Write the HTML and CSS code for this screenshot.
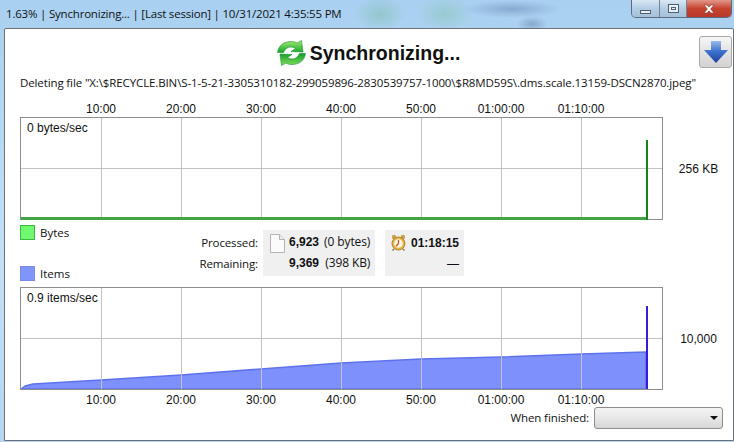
FILE: index.html
```html
<!DOCTYPE html>
<html lang="en">
<head>
<meta charset="utf-8">
<title>Synchronizing</title>
<link rel="stylesheet" href="styles.css">
</head>
<body>
<div class="window">
  <header class="titlebar">
    <span class="title-text">1.63% | Synchronizing... | [Last session] | 10/31/2021 4:35:55 PM</span>
    <div class="controls">
      <span class="ctl ctl-min"><i class="glyph-min"></i></span>
      <span class="ctl ctl-max"><i class="glyph-max"></i></span>
      <span class="ctl ctl-close">
        <svg width="14" height="10" viewBox="0 0 14 10"><path d="M2 1h3l2 2.2L9 1h3L8.6 5 12 9H9L7 6.8 5 9H2l3.400-4z" fill="#fff" stroke="#7d3a30" stroke-width=".6"/></svg>
      </span>
    </div>
  </header>
  <main class="content">
    <div class="heading">
      <div class="heading-main">
        <svg class="sync-icon" width="29" height="26" viewBox="0 0 29 26">
          <defs>
            <linearGradient id="g1" x1="0" y1="0" x2="0" y2="1"><stop offset="0" stop-color="#a5ec70"/><stop offset="1" stop-color="#12a52c"/></linearGradient>
            <linearGradient id="g2" x1="0" y1="0" x2="0" y2="1"><stop offset="0" stop-color="#0f9c2a"/><stop offset="1" stop-color="#86e05c"/></linearGradient>
          </defs>
          <path d="M.5 12.500C1.500 5 7.500 1.500 14 1.500c2.500 0 4.500.5 6 1.500l4.500-2.500 1.500 11.500-12-.5 4.500-3C17 7.500 15.500 7 14 7c-3.500 0-6 2-7.500 5.500z" fill="url(#g1)" stroke="#1c8f32" stroke-width=".6"/>
          <path d="M28.500 13.500C27.500 21 21.500 24.500 15 24.500c-2.500 0-4.500-.5-6-1.500l-4.500 2.500L3 14l12 .5-4.500 3c1.500 1 3 1.500 4.500 1.500 3.500 0 6-2 7.500-5.500z" fill="url(#g2)" stroke="#1c8f32" stroke-width=".6"/>
        </svg>
        <h1 class="heading-text">Synchronizing...</h1>
      </div>
      <button class="down-btn" type="button" aria-label="Minimize to details">
        <svg width="26" height="24" viewBox="0 0 26 24">
          <defs><linearGradient id="g3" x1="0" y1="0" x2="0" y2="1"><stop offset="0" stop-color="#9ab8ea"/><stop offset=".45" stop-color="#3f74d0"/><stop offset="1" stop-color="#1d3f9c"/></linearGradient></defs>
          <path d="M8 1h10v9h7L13 23 1 10h7z" fill="url(#g3)"/>
        </svg>
      </button>
    </div>
    <p class="status">Deleting file "X:\$RECYCLE.BIN\S-1-5-21-3305310182-299059896-2830539757-1000\$R8MD59S\.dms.scale.13159-DSCN2870.jpeg"</p>
    <div class="axis axis-top">
      <span>10:00</span><span>20:00</span><span>30:00</span><span>40:00</span><span>50:00</span><span>01:00:00</span><span>01:10:00</span>
    </div>
    <div class="chart-row">
      <div class="chart">
        <svg class="chart-svg" width="643" height="103" viewBox="0 0 643 103">
          <path class="gridline" d="M81.500 0v103M161.500 0v103M241.500 0v103M321.500 0v103M401.500 0v103M481.500 0v103M561.500 0v103M0 51.500h643"/>
          <rect class="frame" x=".5" y=".5" width="642" height="102"/>
          <rect x="1" y="100" width="626" height="3" fill="#43a443"/>
          <rect x="626" y="23" width="2" height="80" fill="#16841a"/>
        </svg>
        <span class="rate">0 bytes/sec</span>
      </div>
      <span class="scale">256 KB</span>
    </div>
    <div class="middle">
      <div class="legend">
        <div class="legend-item"><i class="swatch swatch-green"></i><span>Bytes</span></div>
        <div class="legend-item"><i class="swatch swatch-blue"></i><span>Items</span></div>
      </div>
      <div class="stat-labels"><span>Processed:</span><span>Remaining:</span></div>
      <div class="panel panel-items">
        <svg class="doc-icon" width="15" height="19" viewBox="0 0 15 19"><path d="M.5.500h9l5 5v13H.5z" fill="#fbfbfb" stroke="#b4b4b4"/><path d="M9.500.500v5h5" fill="#eee" stroke="#b4b4b4"/></svg>
        <div class="panel-grid">
          <b>6,923</b><span>(0 bytes)</span>
          <b>9,369</b><span>(398 KB)</span>
        </div>
      </div>
      <div class="panel panel-time">
        <div class="time-row">
          <svg width="15" height="17" viewBox="0 0 15 17"><circle cx="3" cy="3" r="2.200" fill="#caa24a"/><circle cx="12" cy="3" r="2.200" fill="#caa24a"/><path d="M3 15l-1.500 1.500M12 15l1.500 1.500" stroke="#8a6a2a" stroke-width="1.200"/><circle cx="7.500" cy="9.500" r="6.500" fill="#e6b545" stroke="#a9822d"/><circle cx="7.500" cy="9.500" r="4.300" fill="#fdf6e4"/><path d="M7.500 9.500l-2.500 3M7.500 9.500V6" stroke="#c8431f" stroke-width="1.200" fill="none"/></svg>
          <b>01:18:15</b>
        </div>
        <b class="time-dash">—</b>
      </div>
    </div>
    <div class="chart-row">
      <div class="chart">
        <svg class="chart-svg" width="643" height="103" viewBox="0 0 643 103">
          <path d="M1 102 5 99 13 97 81 93 161 88 241 82 321 76 401 72 481 70 561 67 626 65V102z" fill="#7e90fb" stroke="#5f72ee" stroke-width="1.500" stroke-linejoin="round"/>
          <path class="gridline" d="M81.500 0v103M161.500 0v103M241.500 0v103M321.500 0v103M401.500 0v103M481.500 0v103M561.500 0v103M0 51.500h643"/>
          <rect x="626" y="19" width="2" height="84" fill="#3a1cd8"/>
          <rect class="frame" x=".5" y=".5" width="642" height="102"/>
        </svg>
        <span class="rate">0.9 items/sec</span>
      </div>
      <span class="scale">10,000</span>
    </div>
    <div class="axis axis-bottom">
      <span>10:00</span><span>20:00</span><span>30:00</span><span>40:00</span><span>50:00</span><span>01:00:00</span><span>01:10:00</span>
    </div>
    <div class="finish-row">
      <span class="finish-label">When finished:</span>
      <div class="combo"><i class="combo-arrow"></i></div>
    </div>
  </main>
</div>
</body>
</html>
```

FILE: styles.css
```css
* { box-sizing: border-box; }
html, body { margin: 0; padding: 0; }
body { width: 734px; height: 442px; overflow: hidden; font-family: "Liberation Sans", Arial, sans-serif; color: #111; }

.window {
  width: 734px;
  height: 442px;
  padding: 0 0 1px 4px;
  display: flex;
  flex-direction: column;
  background:
    radial-gradient(ellipse 26px 18px at 380px 14px, rgba(130,190,175,.55), transparent),
    radial-gradient(ellipse 28px 18px at 445px 14px, rgba(135,195,175,.5), transparent),
    radial-gradient(ellipse 50px 9px at 512px 9px, rgba(95,125,170,.45), transparent),
    radial-gradient(ellipse 16px 8px at 532px 24px, rgba(80,110,150,.4), transparent),
    linear-gradient(#a9d0f1, #c4e0f6 60%, #b5d5f1);
}

.titlebar { height: 28px; flex: none; display: flex; align-items: flex-start; }
.title-text { font: 11.5px/28px "Open Sans", sans-serif; margin-left: 2px; color: #111; letter-spacing: -.2px; white-space: nowrap; }
.controls { margin-left: auto; margin-right: 2px; display: flex; height: 18px; border: 1px solid #5a6d82; border-top: 0; border-radius: 0 0 5px 5px; overflow: hidden; }
.ctl { display: flex; align-items: center; justify-content: center; }
.ctl-min, .ctl-max { width: 28px; background: linear-gradient(#d9e8f5, #b4cde3 50%, #a5c0d8); border-right: 1px solid #71859a; }
.ctl-max { width: 27px; }
.ctl-close { width: 44px; background: linear-gradient(#e2988a, #c6442e 50%, #b8372a); }
.glyph-min { display: block; width: 11px; height: 4px; margin-top: 6px; background: #e8eff6; border: 1px solid #4e6074; }
.glyph-max { display: block; width: 11px; height: 9px; border: 1px solid #4e6074; background: #e8eff6; box-shadow: inset 0 0 0 2px #e8eff6, inset 0 0 0 3px #4e6074; }

.content {
  flex: 1;
  background: #fff;
  border: 1px solid #6b7178;
  border-radius: 2px 2px 0 0;
  padding: 6px 1px 0 15px;
  display: flex;
  flex-direction: column;
}

.heading { display: grid; grid-template-columns: 1fr auto 1fr; align-items: center; height: 33px; }
.heading-main { grid-column: 2; display: flex; align-items: center; gap: 4px; margin-right: 15px; padding-top: 2px; }
.sync-icon { display: block; flex: none; }
.heading-text { margin: 0; font: bold 19.5px/24px "Liberation Sans", sans-serif; color: #111; white-space: nowrap; }
.down-btn { grid-column: 3; justify-self: end; align-self: end; width: 33px; height: 32px; padding: 0; display: flex; align-items: center; justify-content: center; border: 1px solid #a8a8a8; border-radius: 3px; background: linear-gradient(#f6f6f6, #e2e2e2 50%, #d2d2d2); }

.status { margin: 7px 0 0; font: 11.5px/16px "Open Sans", sans-serif; letter-spacing: -.12px; white-space: nowrap; }

.axis { display: flex; padding-left: 41px; font-size: 12px; line-height: 14px; color: #111; }
.axis span { width: 80px; text-align: center; }
.axis-top { margin-top: 11px; }
.axis-bottom { margin-top: 3px; }

.chart-row { display: flex; align-items: center; }
.axis-top + .chart-row { margin-top: 1px; }
.chart { position: relative; width: 643px; height: 103px; flex: none; }
.chart-svg { display: block; }
.gridline { stroke: #c2c2c2; stroke-width: 1; fill: none; }
.frame { fill: none; stroke: #8e8e8e; }
.rate { position: absolute; left: 7px; top: 4px; font-size: 12px; line-height: 14px; background: #fff; }
.scale { flex: 1; text-align: center; font-size: 12px; line-height: 14px; padding-left: 2px; }

.middle { height: 67px; display: flex; align-items: flex-start; }
.legend { width: 165px; padding-top: 5px; display: flex; flex-direction: column; gap: 26px; flex: none; }
.legend-item { display: flex; align-items: center; gap: 5px; font: 11.5px/15px "Open Sans", sans-serif; }
.swatch { display: block; width: 15px; height: 15px; border: 1px solid; }
.swatch-green { background: #70f870; border-color: #3fb83f; }
.swatch-blue { background: #8095fb; border-color: #7a8ce6; }
.stat-labels { width: 73px; padding-top: 15px; display: flex; flex-direction: column; gap: 5px; align-items: flex-end; font: 11.5px/16px "Open Sans", sans-serif; letter-spacing: -.12px; flex: none; }
.panel { background: #f0f0f0; margin-top: 10px; height: 46px; }
.panel-items { margin-left: 5px; width: 112px; display: flex; padding: 4px 0 0 7px; gap: 4px; }
.doc-icon { flex: none; }
.panel-grid { display: grid; grid-template-columns: auto auto; align-content: start; column-gap: 5px; row-gap: 5px; font-size: 12px; line-height: 16px; align-items: center; }
.panel-grid b { font-weight: bold; }
.panel-grid span { font: 12px/16px "Open Sans", sans-serif; letter-spacing: -.1px; justify-self: end; }
.panel-time { margin-left: 10px; width: 79px; padding: 4px 5px 0 6px; font-size: 12px; line-height: 16px; display: flex; flex-direction: column; gap: 5px; }
.time-row { display: flex; align-items: center; gap: 5px; }
.time-dash { align-self: flex-end; font-weight: normal; }

.finish-row { display: flex; align-items: center; justify-content: flex-end; gap: 5px; padding-right: 9px; }
.finish-label { font: 11.5px/16px "Open Sans", sans-serif; letter-spacing: -.1px; }
.combo { width: 129px; height: 22px; border: 1px solid #8d8d8d; border-radius: 3px; background: linear-gradient(#f3f3f3, #e8e8e8 50%, #d5d5d5); display: flex; align-items: center; justify-content: flex-end; padding-right: 4px; }
.combo-arrow { display: block; width: 0; height: 0; border: 4px solid transparent; border-top: 4px solid #111; border-bottom: 0; }
```
